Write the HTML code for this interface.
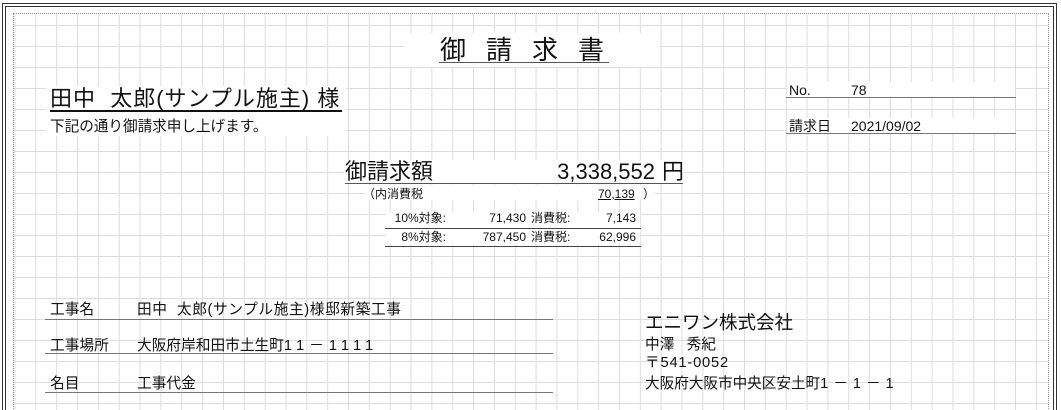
<!DOCTYPE html>
<html><head><meta charset="utf-8"><style>
html,body{margin:0;padding:0;width:1061px;height:410px;overflow:hidden}
body{background:#fff;font-family:"Liberation Sans","Noto Sans CJK JP",sans-serif;color:#111}
#c{position:relative;width:1061px;height:410px;overflow:hidden}
.grid{position:absolute;left:14px;top:14px;width:1034px;height:396px;
background-image:linear-gradient(to right,#dcdcdc 1px,transparent 1px),linear-gradient(to bottom,#dcdcdc 1px,transparent 1px);
background-size:20.85px 21px;background-position:0.5px 11px}
.t{position:absolute;white-space:nowrap;line-height:1}
.ln{position:absolute;height:1px;background:#777}
.w{position:absolute;background:#fff}
.d{letter-spacing:5px}
</style></head><body><div id="c">
<div class="grid"></div>
<div style="position:absolute;left:2px;top:3px;width:1053px;height:407px;border:1px solid #333;border-bottom:none"></div>
<div style="position:absolute;left:5px;top:6px;width:1047px;height:404px;border:1px solid #333;border-bottom:none"></div>
<div style="position:absolute;left:13px;top:13px;width:1034px;height:397px;border:1px dotted #999;border-bottom:none"></div>

<div class="w" style="left:404px;top:33px;width:256px;height:34px"></div>
<div class="t" style="left:440px;top:37px;font-size:26px;letter-spacing:20px">御請求書</div>
<div class="ln" style="left:439px;top:62px;width:170px;background:#555"></div>

<div class="w" style="left:46px;top:86px;width:300px;height:50px"></div>
<div class="t" style="left:50px;top:88px;font-size:22px;letter-spacing:1px">田中&nbsp;&nbsp;太郎(サンプル施主) 様</div>
<div class="ln" style="left:50px;top:110px;width:292px;height:2px;background:#111"></div>
<div class="t" style="left:50px;top:120px;font-size:14.6px">下記の通り御請求申し上げます。</div>

<div class="w" style="left:787px;top:82px;width:228px;height:16px"></div>
<div class="t" style="left:789px;top:83px;font-size:14px">No.</div>
<div class="t" style="left:851px;top:83px;font-size:14px">78</div>
<div class="ln" style="left:786px;top:97px;width:230px;height:1px"></div>
<div class="w" style="left:787px;top:118px;width:228px;height:15px"></div>
<div class="t" style="left:789px;top:119px;font-size:14px">請求日</div>
<div class="t" style="left:851px;top:119px;font-size:14px">2021/09/02</div>
<div class="ln" style="left:786px;top:133px;width:230px"></div>

<div class="w" style="left:344px;top:160px;width:340px;height:23px"></div>
<div class="t" style="left:345px;top:161px;font-size:22px">御請求額</div>
<div class="t" style="left:540px;top:161px;width:115px;text-align:right;font-size:22px">3,338,552</div>
<div class="t" style="left:662px;top:161px;font-size:22px">円</div>
<div class="ln" style="left:345px;top:183px;width:338px;background:#555"></div>
<div class="w" style="left:365px;top:185px;width:290px;height:15px"></div>
<div class="t" style="left:363px;top:188px;font-size:12px">（内消費税</div>
<div class="t" style="left:598px;top:188px;font-size:12px;text-decoration:underline">70,139</div>
<div class="t" style="left:643px;top:188px;font-size:12px">）</div>

<div class="w" style="left:386px;top:212px;width:254px;height:32px"></div>
<div class="t" style="left:376px;top:212px;width:70px;text-align:right;font-size:12px">10%対象:</div>
<div class="t" style="left:456px;top:212px;width:70px;text-align:right;font-size:12px">71,430</div>
<div class="t" style="left:531px;top:212px;font-size:12px">消費税:</div>
<div class="t" style="left:576px;top:212px;width:60px;text-align:right;font-size:12px">7,143</div>
<div class="ln" style="left:385px;top:228px;width:256px;background:#444"></div>
<div class="t" style="left:376px;top:231px;width:70px;text-align:right;font-size:12px">8%対象:</div>
<div class="t" style="left:456px;top:231px;width:70px;text-align:right;font-size:12px">787,450</div>
<div class="t" style="left:531px;top:231px;font-size:12px">消費税:</div>
<div class="t" style="left:576px;top:231px;width:60px;text-align:right;font-size:12px">62,996</div>
<div class="ln" style="left:385px;top:246px;width:256px;background:#444"></div>

<div class="t" style="left:50px;top:303px;font-size:14.7px">工事名</div>
<div class="t" style="left:137px;top:303px;font-size:14.7px;letter-spacing:0.6px">田中&nbsp;&nbsp;太郎(サンプル施主)様邸新築工事</div>
<div class="ln" style="left:45px;top:319px;width:508px"></div>
<div class="t" style="left:50px;top:339px;font-size:14.7px">工事場所</div>
<div class="t" style="left:137px;top:339px;font-size:14.7px">大阪府岸和田市土生町<span class="d">11－1111</span></div>
<div class="ln" style="left:45px;top:353px;width:508px"></div>
<div class="t" style="left:50px;top:377px;font-size:14.7px">名目</div>
<div class="t" style="left:137px;top:377px;font-size:14.7px">工事代金</div>
<div class="ln" style="left:45px;top:392px;width:508px"></div>

<div class="t" style="left:645px;top:314px;font-size:18.5px">エニワン株式会社</div>
<div class="t" style="left:645px;top:338px;font-size:14.7px">中澤&nbsp;&nbsp;&nbsp;秀紀</div>
<div class="t" style="left:645px;top:356px;font-size:14.7px;letter-spacing:0.8px">〒541-0052</div>
<div class="t" style="left:645px;top:377px;font-size:14.6px">大阪府大阪市中央区安土町<span class="d">1－1－1</span></div>
</div></body></html>
